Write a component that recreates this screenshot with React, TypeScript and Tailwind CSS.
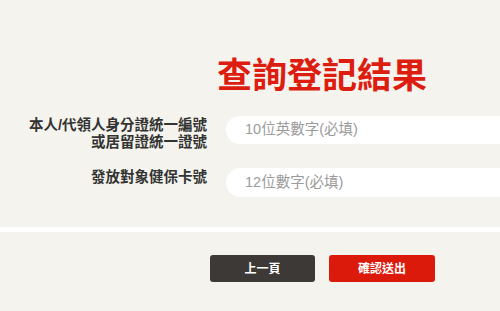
import React from "react";

const font = { fontFamily: '"Liberation Sans", "Noto Sans CJK TC", sans-serif' };

export default function App() {
  return (
    <div className="w-[500px] h-[311px] overflow-hidden bg-[#f4f3ed]" style={font}>
      <div className="h-[227px] flex flex-col">
        <h1 className="pl-[217px] pt-[52px] text-[35px] leading-[48px] font-bold text-[#dc1d10]">
          查詢登記結果
        </h1>
        <div className="flex items-start mt-[16px]">
          <div className="w-[207px] shrink-0 text-right text-[14.5px] leading-[17px] font-bold text-[#333] pt-[1px]">
            本人/代領人身分證統一編號
            <br />
            或居留證統一證號
          </div>
          <div className="ml-[19px] w-[320px] shrink-0 h-[28px] bg-white rounded-l-full flex items-center pl-[19px] text-[14.5px] text-[#9b9b9b]">
            10位英數字(必填)
          </div>
        </div>
        <div className="flex items-start mt-[17px]">
          <div className="w-[207px] shrink-0 text-right text-[14.5px] leading-[17px] font-bold text-[#333] pt-[1px]">
            發放對象健保卡號
          </div>
          <div className="ml-[19px] w-[320px] shrink-0 h-[29px] bg-white rounded-l-full flex items-center pl-[19px] text-[14.5px] text-[#9b9b9b]">
            12位數字(必填)
          </div>
        </div>
      </div>
      <div className="h-[5px] bg-white" />
      <div className="flex pl-[210px] gap-[14px] pt-[23px]">
        <button className="w-[105px] h-[27px] rounded-[3px] bg-[#3d3937] text-white text-[12px] font-bold">
          上一頁
        </button>
        <button className="w-[106px] h-[27px] rounded-[3px] bg-[#dc1a0b] text-white text-[12px] font-bold">
          確認送出
        </button>
      </div>
    </div>
  );
}
